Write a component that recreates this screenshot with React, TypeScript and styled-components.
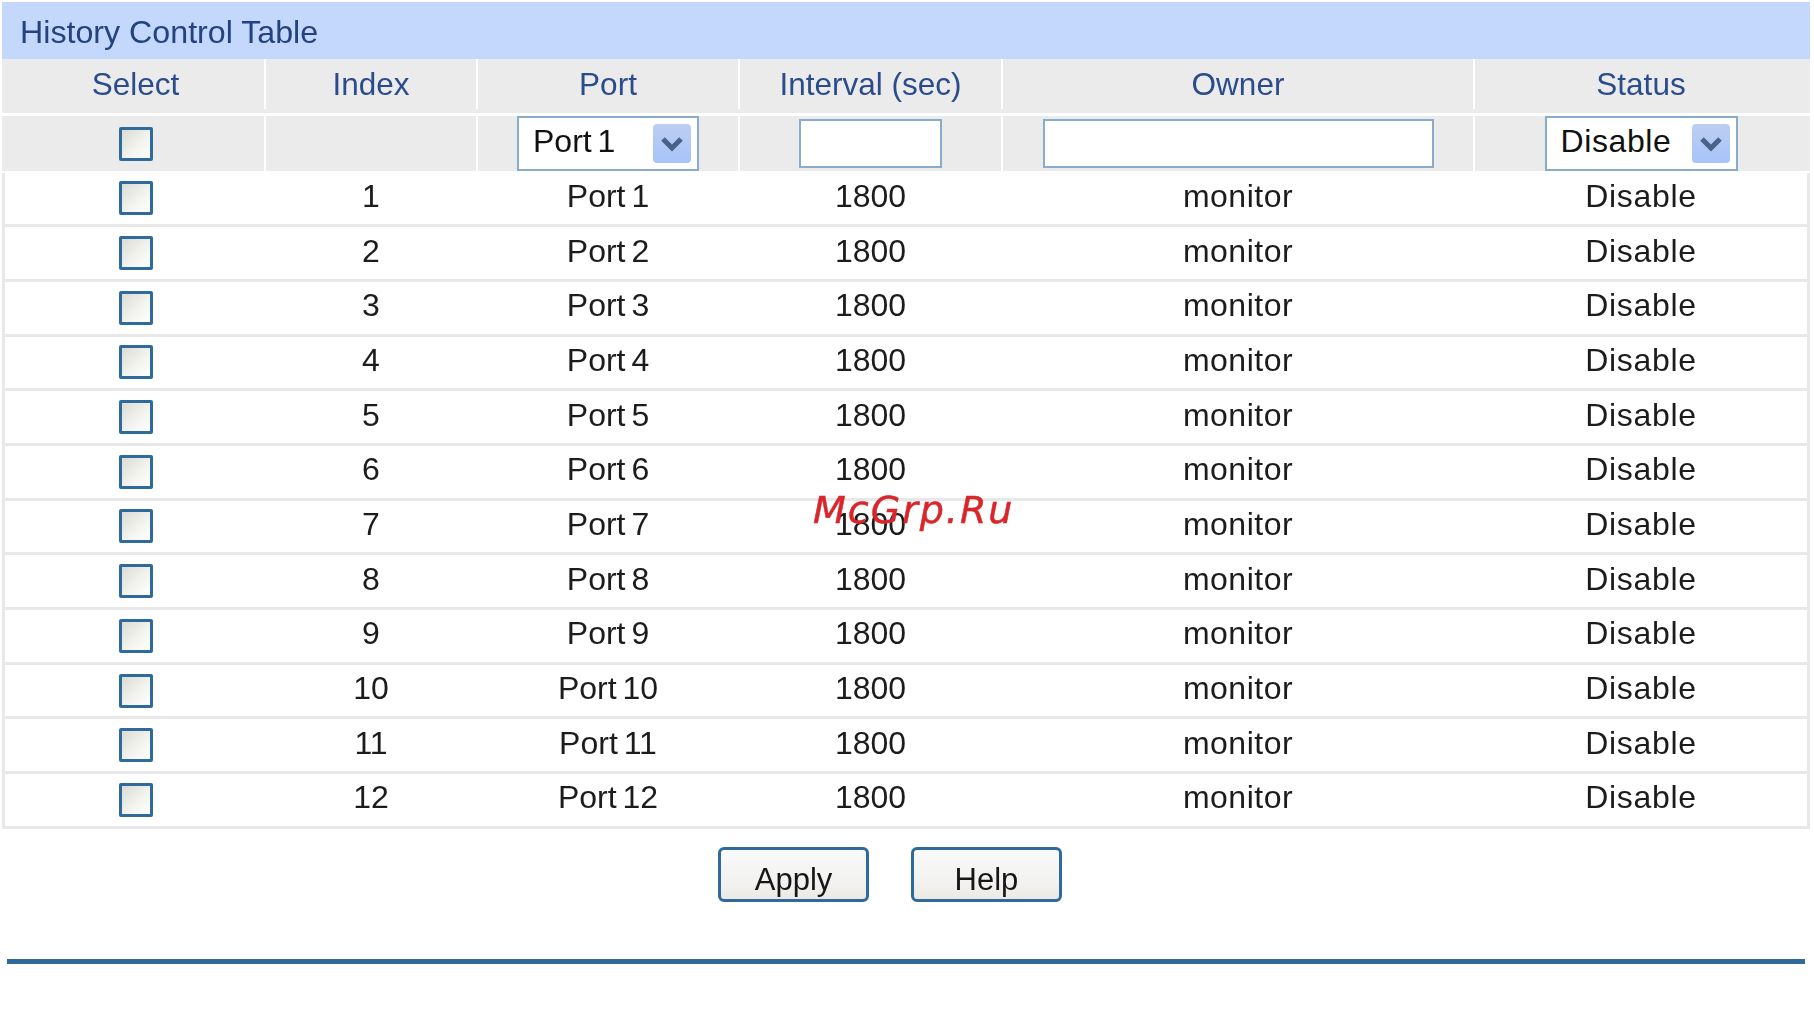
import React from 'react';
import styled, { createGlobalStyle } from 'styled-components';

const GlobalStyle = createGlobalStyle`
  html, body {
    margin: 0;
    padding: 0;
    background: #fff;
  }
`;

const COLUMNS = '264px 212px 262px 263px 472px 335px';
const FONT = '"Liberation Sans", Arial, sans-serif';

const Page = styled.div`
  position: relative;
  width: 1814px;
  height: 1018px;
  padding: 2px 4px 0 2px;
  box-sizing: border-box;
  overflow: hidden;
  font-family: ${FONT};
  font-size: 32px;
  color: #1c1c1c;
`;

const Softened = styled.div`
  filter: blur(0.5px);
`;

const TitleBar = styled.div`
  height: 57px;
  padding: 4px 0 0 18px;
  box-sizing: border-box;
  display: flex;
  align-items: center;
  background: #c4d8fd;
  color: #23427f;
  font-size: 32.2px;
`;

const HeadRow = styled.div`
  display: grid;
  grid-template-columns: ${COLUMNS};
  height: 54px;
  margin-bottom: 3px;
  padding-bottom: 4px;
  box-sizing: border-box;
  background: #ebebeb;
  color: #2b4c8c;
  font-size: 31.5px;
`;

const FilterRow = styled.div`
  display: grid;
  grid-template-columns: ${COLUMNS};
  height: 55px;
  margin-bottom: 1.5px;
  background: #ebebeb;
`;

const DataRow = styled.div`
  display: grid;
  grid-template-columns: ${COLUMNS};
  height: 54.7px;
  box-sizing: border-box;
  border-bottom: 3px solid #e8e8e8;
  box-shadow: inset 3px 0 #e8e8e8, inset -3px 0 #e8e8e8;
`;

const Cell = styled.div`
  display: flex;
  align-items: center;
  justify-content: center;
  min-width: 0;
  box-sizing: border-box;
  border-right: 2px solid #fff;
`;

const SelectCell = styled(Cell)`
  padding-left: 5px;
`;

const StatusCell = styled(Cell)`
  border-right: none;
  padding-right: 3px;
`;

const Value = styled.span<{ $tracking?: number; $wordGap?: number }>`
  padding-bottom: 4px;
  letter-spacing: ${(p) => p.$tracking ?? 0}px;
  word-spacing: ${(p) => p.$wordGap ?? 0}px;
`;

const CheckBox = styled.input.attrs({ type: 'checkbox' })`
  appearance: none;
  width: 34px;
  height: 34px;
  margin: 0;
  box-sizing: border-box;
  border: 3px solid #2f6a9c;
  border-radius: 2px;
  background: linear-gradient(135deg, #dcdcd6 0%, #f2f2ee 55%, #ffffff 100%);
`;

const Field = styled.input.attrs({ type: 'text' })<{ $width: number }>`
  width: ${(p) => p.$width}px;
  height: 49px;
  box-sizing: border-box;
  padding: 0;
  border: 2.5px solid #8aaccb;
  background: #fff;
  outline: none;
`;

const Dropdown = styled.div<{ $width: number }>`
  width: ${(p) => p.$width}px;
  height: 55px;
  box-sizing: border-box;
  padding: 6px 6px 6px 14px;
  display: flex;
  align-items: center;
  justify-content: space-between;
  border: 2.5px solid #8aaccb;
  background: #fff;
  color: #111;
`;

const DropdownLabel = styled.span<{ $tracking?: number; $wordGap?: number }>`
  padding-bottom: 4px;
  letter-spacing: ${(p) => p.$tracking ?? 0}px;
  word-spacing: ${(p) => p.$wordGap ?? 0}px;
`;

const DropdownArrow = styled.span`
  width: 38px;
  height: 39px;
  display: flex;
  align-items: center;
  justify-content: center;
  border-radius: 4px;
  background: linear-gradient(180deg, #bccff2 0%, #a8c3fb 100%);
`;

const Actions = styled.div`
  display: flex;
  justify-content: center;
  gap: 42px;
  padding: 18px 32px 0 0;
`;

const Button = styled.button`
  width: 151px;
  height: 55px;
  padding: 12px 0 0;
  box-sizing: border-box;
  border: 3px solid #2f6a9c;
  border-radius: 6px;
  background: linear-gradient(180deg, #fafafa 0%, #f1f1f0 70%, #ebe9e2 100%);
  font-family: ${FONT};
  font-size: 31px;
  color: #161616;
`;

const Rule = styled.div`
  height: 5px;
  margin: 57px 5px 0 5px;
  background: #2e6a9c;
`;

const Watermark = styled.div`
  position: absolute;
  left: 813px;
  top: 485px;
  font-family: "DejaVu Sans", sans-serif;
  font-style: italic;
  font-size: 38px;
  letter-spacing: 2px;
  line-height: 50px;
  color: #d8262a;
  -webkit-text-stroke: 0.5px #d8262a;
`;

const Chevron = () => (
  <svg width="24" height="18" viewBox="0 0 24 18" aria-hidden="true">
    <path d="M3 4 L12 13 L21 4" fill="none" stroke="#4a6288" strokeWidth="5" />
  </svg>
);

const PORTS = Array.from({ length: 12 }, (_, i) => i + 1);

const App: React.FC = () => (
  <Page>
    <GlobalStyle />
    <Softened>
      <TitleBar>History Control Table</TitleBar>
      <HeadRow>
        <SelectCell>Select</SelectCell>
        <Cell>Index</Cell>
        <Cell>Port</Cell>
        <Cell>Interval (sec)</Cell>
        <Cell>Owner</Cell>
        <StatusCell>Status</StatusCell>
      </HeadRow>
      <FilterRow>
        <SelectCell><CheckBox /></SelectCell>
        <Cell />
        <Cell>
          <Dropdown $width={182}>
            <DropdownLabel $wordGap={-3}>Port 1</DropdownLabel>
            <DropdownArrow><Chevron /></DropdownArrow>
          </Dropdown>
        </Cell>
        <Cell><Field $width={143} /></Cell>
        <Cell><Field $width={391} /></Cell>
        <StatusCell>
          <Dropdown $width={193}>
            <DropdownLabel $tracking={0.6}>Disable</DropdownLabel>
            <DropdownArrow><Chevron /></DropdownArrow>
          </Dropdown>
        </StatusCell>
      </FilterRow>
      {PORTS.map((n) => (
        <DataRow key={n}>
          <SelectCell><CheckBox /></SelectCell>
          <Cell><Value>{n}</Value></Cell>
          <Cell><Value $wordGap={-3}>Port {n}</Value></Cell>
          <Cell><Value>1800</Value></Cell>
          <Cell><Value $tracking={0.5}>monitor</Value></Cell>
          <StatusCell><Value $tracking={0.7}>Disable</Value></StatusCell>
        </DataRow>
      ))}
      <Actions>
        <Button>Apply</Button>
        <Button>Help</Button>
      </Actions>
      <Rule />
    </Softened>
    <Watermark>McGrp.Ru</Watermark>
  </Page>
);

export default App;
